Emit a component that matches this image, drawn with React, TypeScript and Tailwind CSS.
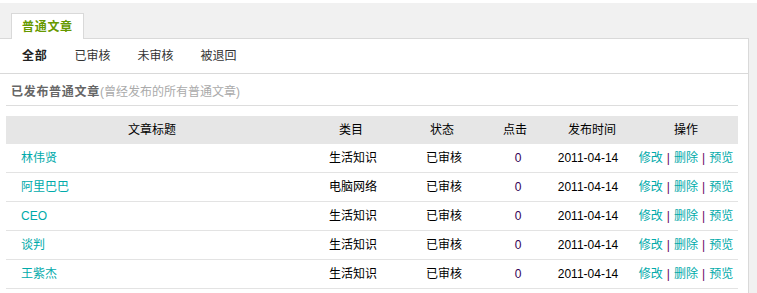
import React from "react";

const rows = [
  { title: "林伟贤", cat: "生活知识" },
  { title: "阿里巴巴", cat: "电脑网络" },
  { title: "CEO", cat: "生活知识" },
  { title: "谈判", cat: "生活知识" },
  { title: "王紫杰", cat: "生活知识" },
];

const cols = "grid grid-cols-[292px_106px_76px_70px_84px_104px]";

export default function App() {
  return (
    <div className="w-[757px] h-[293px] overflow-hidden bg-white pt-[3px] font-['Liberation_Sans','Noto_Sans_CJK_SC',sans-serif] text-[12px] leading-[16px] text-[#333]">
      <div className="bg-[#f1f1f1] h-[290px] pt-[10px] pr-[8px]">
        {/* tab strip */}
        <div className="flex pl-[11px]">
          <div className="relative z-10 h-[26px] -mb-px border border-b-0 border-[#d9d9d9] bg-white px-[10px] flex items-center font-bold tracking-[0.7px] text-[#669900]">
            普通文章
          </div>
        </div>

        {/* panel */}
        <div className="bg-white border-t border-r border-[#d9d9d9] h-[260px]">
          <div className="flex gap-[27px] pl-[22px] h-[35px] items-center border-b border-[#d9d9d9]">
            <span className="font-bold tracking-[0.7px] text-[#222]">全部</span>
            <span>已审核</span>
            <span>未审核</span>
            <span>被退回</span>
          </div>

          <div className="w-[732px] ml-[6px]">
            <div className="h-[32px] pl-[5px] flex items-end pb-[5px] border-b border-[#dddddd]">
              <span className="font-bold tracking-[0.7px] text-[#666]">已发布普通文章</span>
              <span className="text-[#aaa]">(曾经发布的所有普通文章)</span>
            </div>

            <div className="mt-[10px]">
              <div className={`${cols} h-[28px] items-center bg-[#e6e6e6] text-black text-center`}>
                <div>文章标题</div>
                <div>类目</div>
                <div>状态</div>
                <div>点击</div>
                <div>发布时间</div>
                <div>操作</div>
              </div>
              {rows.map((r) => (
                <div
                  key={r.title}
                  className={`${cols} h-[29px] items-center border-b border-[#e3e3e3] text-black text-center`}
                >
                  <div className="text-left pl-[15px] text-[#00aaaa]">{r.title}</div>
                  <div className="pl-[4px]">{r.cat}</div>
                  <div className="pl-[4px]">已审核</div>
                  <div className="pl-[6px] text-[#330055]">0</div>
                  <div className="pr-[8px]">2011-04-14</div>
                  <div className="text-[#00aaaa]">
                    修改<span className="px-[4px] text-[#660066]">|</span>删除
                    <span className="px-[4px] text-[#660066]">|</span>预览
                  </div>
                </div>
              ))}
            </div>
          </div>
        </div>
      </div>
    </div>
  );
}
